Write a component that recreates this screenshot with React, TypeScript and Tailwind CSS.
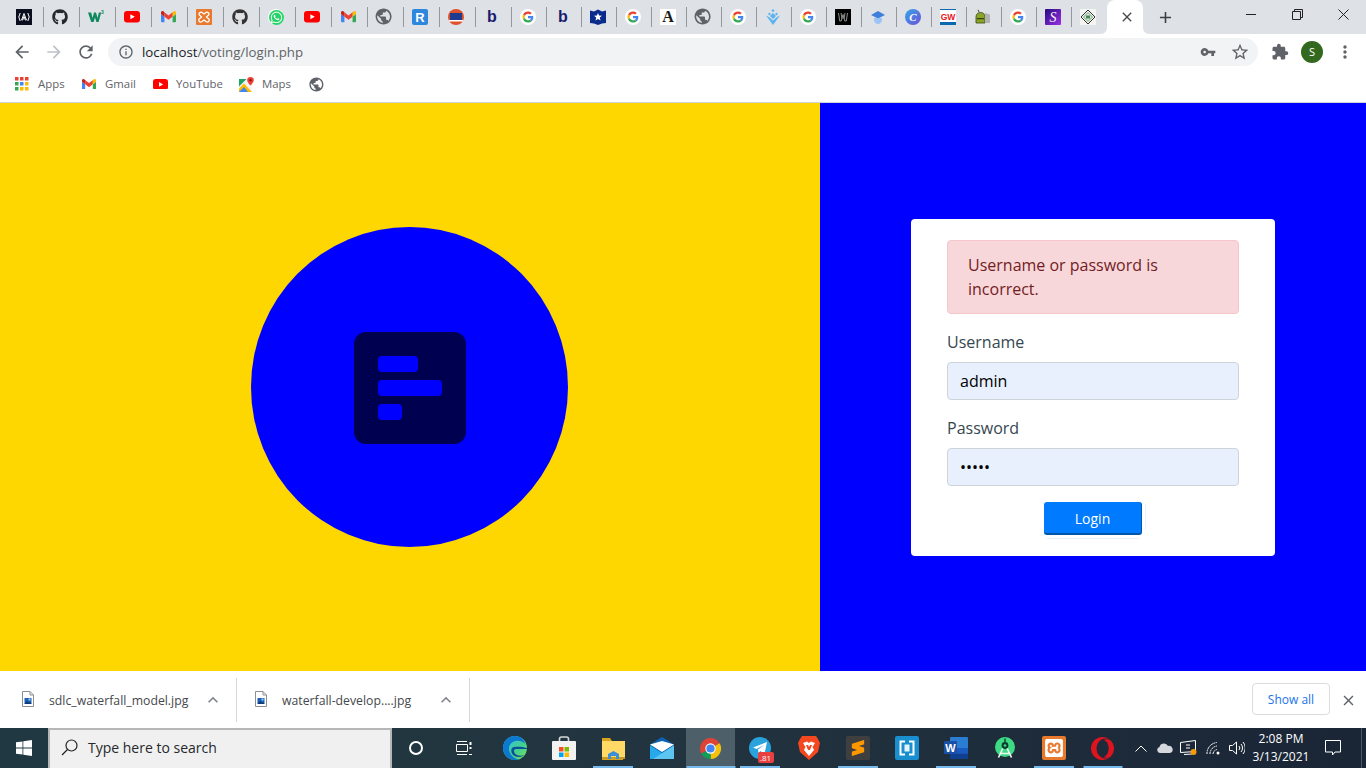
import React from "react";
import {
  MdArrowBack, MdArrowForward, MdRefresh, MdInfoOutline, MdVpnKey, MdStarBorder, MdExtension, MdMoreVert, MdPublic, MdClose, MdAdd, MdExpandLess,
} from "react-icons/md";
import { FaGithub, FaWhatsapp } from "react-icons/fa";
import { SiXampp, SiOpera, SiSublimetext } from "react-icons/si";

const UI = "font-['Open_Sans','Noto_Sans',sans-serif]";

const G = ({ s = 16 }: { s?: number }) => (
  <svg width={s} height={s} viewBox="0 0 64 64">
    <circle cx="32" cy="32" r="32" fill="#fff" />
    <g transform="translate(10 10) scale(0.917)">
      <path fill="#EA4335" d="M24 9.5c3.54 0 6.71 1.22 9.21 3.6l6.85-6.85C35.9 2.38 30.47 0 24 0 14.62 0 6.51 5.38 2.56 13.22l7.98 6.19C12.43 13.72 17.74 9.5 24 9.5z" />
      <path fill="#4285F4" d="M46.98 24.55c0-1.57-.15-3.09-.38-4.55H24v9.02h12.94c-.58 2.96-2.26 5.48-4.78 7.18l7.73 6c4.51-4.18 7.09-10.36 7.09-17.65z" />
      <path fill="#FBBC05" d="M10.53 28.59c-.48-1.45-.76-2.99-.76-4.59s.27-3.14.76-4.59l-7.98-6.19C.92 16.46 0 20.12 0 24c0 3.88.92 7.54 2.56 10.78l7.97-6.19z" />
      <path fill="#34A853" d="M24 48c6.48 0 11.93-2.13 16.08-5.81l-7.73-6c-2.15 1.45-4.92 2.3-8.35 2.3-6.26 0-11.57-4.22-13.47-9.91l-7.98 6.19C6.51 42.62 14.62 48 24 48z" />
    </g>
  </svg>
);
const Gmail = ({ w = 15 }: { w?: number }) => (
  <svg width={w} height={w * 0.75} viewBox="0 0 24 18">
    <path fill="#4285F4" d="M1.6 18H5.5V9L0 4.8V16.4A1.6 1.6 0 0 0 1.6 18z" />
    <path fill="#34A853" d="M18.5 18h3.9a1.6 1.6 0 0 0 1.6-1.6V4.8L18.5 9z" />
    <path fill="#FBBC04" d="M18.5 2v7L24 4.8V2.4C24 .4 21.8-.7 20.2.5z" />
    <path fill="#EA4335" d="M5.5 9V2L12 7l6.5-5v7L12 14z" />
    <path fill="#C5221F" d="M0 2.4v2.4L5.5 9V2L3.8.5C2.2-.7 0 .4 0 2.4z" />
  </svg>
);
const Yt = ({ w = 16 }: { w?: number }) => (
  <svg width={w} height={w * 0.72} viewBox="0 0 16 11.5">
    <rect width="16" height="11.5" rx="3" fill="#f00" />
    <path d="M6.4 3.2v5.1l4.4-2.55z" fill="#fff" />
  </svg>
);
const Globe = ({ s = 16 }: { s?: number }) => <MdPublic size={s * 1.2} color="#5f6368" className="shrink-0 -m-[1.5px]" />;
const Letter = ({ c, fill, serif, size, bg }: { c: string; fill: string; serif?: boolean; size: number; bg?: string }) => (
  <svg width="16" height="16" viewBox="0 0 16 16">
    {bg && <rect width="16" height="16" fill={bg} />}
    <text x="8" y="13" textAnchor="middle" fontSize={size} fontWeight="700" fill={fill} fontFamily={serif ? "Liberation Serif, serif" : "Liberation Sans, sans-serif"}>{c}</text>
  </svg>
);

const favicons: React.ReactNode[] = [
  <svg width="16" height="16" viewBox="0 0 16 16"><rect width="16" height="16" fill="#0b0e1f" /><path d="M8 4.5 5.6 11h1.1l1.3-3.6L9.3 11h1.1zM4.2 4 2.8 8l1.4 4M11.8 4l1.4 4-1.4 4" fill="none" stroke="#fff" strokeWidth="1" /></svg>,
  <FaGithub size={16} color="#24292e" />,
  <svg width="16" height="16" viewBox="0 0 16 16"><path d="M0 3.500h3.200l1.300 5.500L6 3.500h2l1.600 5.500 1.200-5.500h2.400L10.600 13H8.400L7 8.400 5.600 13H3.200z" fill="#0f8a5f" /><text x="13" y="5" fontSize="5" fontWeight="700" fill="#0f8a5f" fontFamily="Liberation Sans, sans-serif">3</text></svg>,
  <Yt />,
  <Gmail />,
  <svg width="16" height="16" viewBox="0 0 16 16"><rect width="16" height="16" fill="#e8792d" rx="1" /><SiXamppInner /></svg>,
  <FaGithub size={16} color="#333" />,
  <FaWhatsappColor />,
  <Yt />,
  <Gmail />,
  <Globe />,
  <svg width="16" height="16" viewBox="0 0 16 16"><rect width="16" height="16" rx="2" fill="#2f86dd" /><text x="8" y="13" textAnchor="middle" fontSize="13" fontWeight="700" fill="#fff" fontFamily="Liberation Sans, sans-serif">R</text></svg>,
  <svg width="16" height="16" viewBox="0 0 16 16"><circle cx="8" cy="8" r="8" fill="#e0512b" /><rect x="2" y="4" width="12" height="7" fill="#1d3c8f" /><rect x="1" y="11" width="14" height="1.5" fill="#fff" /></svg>,
  <Letter c="b" fill="#1a1a6e" size={16} />,
  <G />,
  <Letter c="b" fill="#1a1a6e" size={16} />,
  <svg width="16" height="16" viewBox="0 0 16 16"><path d="M0 1.500 4 2.500 8 .5l4 2 4-1V14l-4 .5-4 1.500-4-1.500L0 14z" fill="#0a2a8c" /><path d="m8 4 1.100 2.600 2.800.2-2.100 1.800.7 2.800L8 9.900l-2.500 1.500.7-2.800-2.100-1.800 2.800-.2z" fill="#fff" /></svg>,
  <G />,
  <Letter c="A" fill="#1a1a1a" serif size={16} bg="#fff" />,
  <Globe />,
  <G />,
  <svg width="16" height="16" viewBox="0 0 16 16"><path d="M8 0l1.600 1.600L8 3.200 6.400 1.600zM4.500 3.600 6 5.100 4.500 6.600 3 5.100zM11.500 3.600 13 5.100l-1.500 1.500L10 5.100zM8 4l3 3-3 3-3-3zM1 6.500l7 9.500 7-9.500-3 1.500L8 11.500 4 8z" fill="#5bb4f0" /></svg>,
  <G />,
  <svg width="16" height="16" viewBox="0 0 16 16"><rect width="16" height="16" fill="#000" /><path d="M3.500 4l1.200 8h1.500L8 5.500 9.800 12h1.500l1.200-8M6 4l1 6M10 4 9 10" fill="none" stroke="#8f8f8f" strokeWidth="1" /></svg>,
  <svg width="16" height="16" viewBox="0 0 16 16"><path d="M8 2 15 6l-7 3.600L1 6z" fill="#3f7fdc" /><path d="M4 9h8v1.500c0 2.500-1.800 4.500-4 4.500s-4-2-4-4.500z" fill="#9cc3f5" /></svg>,
  <svg width="16" height="16" viewBox="0 0 16 16"><defs><linearGradient id="cg" x1="0" y1="0" x2="1" y2="1"><stop offset="0" stopColor="#3aa6e8" /><stop offset="1" stopColor="#6a4fd8" /></linearGradient></defs><circle cx="8" cy="8" r="8" fill="url(#cg)" /><text x="8" y="12" textAnchor="middle" fontSize="11" fontStyle="italic" fontWeight="700" fill="#fff" fontFamily="Liberation Serif, serif">C</text></svg>,
  <svg width="16" height="16" viewBox="0 0 16 16"><rect width="16" height="16" fill="#fff" /><rect width="16" height="1" fill="#0a6ab0" /><rect y="13" width="16" height="3" fill="#0a6ab0" /><text x="8" y="10.500" textAnchor="middle" fontSize="8.500" fontWeight="700" fill="#e8141c" fontFamily="Liberation Sans, sans-serif">GW</text></svg>,
  <svg width="16" height="16" viewBox="0 0 16 16"><path d="M1 8c0-3 2-4.500 4.500-4.500S10 5 10 8v6H1z" fill="#8aa62a" stroke="#39440f" strokeWidth=".8" /><rect x="2" y="9" width="7" height="1.300" fill="#39440f" /><path d="M10 4l5 1.500V14h-5z" fill="#b3b3b3" /><path d="M4 3 3 .8" stroke="#444" /></svg>,
  <G />,
  <svg width="16" height="16" viewBox="0 0 16 16"><defs><linearGradient id="sg" x1="0" y1="0" x2="1" y2="1"><stop offset="0" stopColor="#2a0a7e" /><stop offset="1" stopColor="#9a30e8" /></linearGradient></defs><rect width="16" height="16" rx="1" fill="url(#sg)" /><text x="8" y="13" textAnchor="middle" fontSize="14" fontStyle="italic" fill="#f4f4f4" fontFamily="Liberation Serif, serif">S</text></svg>,
  <svg width="16" height="16" viewBox="0 0 16 16"><rect width="16" height="16" fill="#f4f4f0" /><path d="M8 1l7 7-7 7-7-7z" fill="none" stroke="#333" strokeWidth="1" /><path d="M8 3.500 12.500 8 8 12.500 3.500 8z" fill="#dfe8d8" stroke="#4a8a5a" strokeWidth=".8" /><rect x="6" y="6.500" width="4" height="3" fill="#4a8a5a" /></svg>,
];

function SiXamppInner() {
  return <path d="M3 5a2 2 0 0 1 3.400-1.200L8 5l1.600-1.200A2 2 0 0 1 13 5a2 2 0 0 1-1.400 1.900L10.500 8l1.100 1.100A2 2 0 1 1 9.600 12.200L8 11l-1.600 1.200a2 2 0 1 1-2-3.100L5.500 8 4.400 6.900A2 2 0 0 1 3 5z" fill="none" stroke="#fff" strokeWidth="1.300" />;
}
function FaWhatsappColor() {
  return (
    <span className="relative flex h-4 w-4 items-center justify-center rounded-full bg-white">
      <span className="flex h-[15px] w-[15px] items-center justify-center rounded-full bg-[#25d366]"><FaWhatsapp size={13} color="#fff" /></span>
    </span>
  );
}

const FileIcon = () => (
  <svg width="12" height="16" viewBox="0 0 12 16">
    <path d="M.5.5h7.500l3.500 3.500v11.500H.5z" fill="#fff" stroke="#8a8f94" />
    <path d="M8 .5V4h3.500" fill="none" stroke="#8a8f94" />
    <rect x="2.500" y="7" width="7" height="6" fill="#1a5fb4" />
    <path d="M2.500 13 5 10l2 2 1-1 1.500 2z" fill="#0c3a78" />
    <rect x="6.500" y="7.500" width="2" height="2" fill="#9cc9f5" />
  </svg>
);

const Chrome = () => (
  <svg width="23" height="23" viewBox="0 0 24 24">
    <path d="M12 12 2.470 17.500A11 11 0 0 1 21.530 6.500Z" fill="#db4437" />
    <path d="M12 12 21.530 6.500A11 11 0 0 1 12 23Z" fill="#f4c20d" />
    <path d="M12 12V23A11 11 0 0 1 2.470 17.500Z" fill="#0f9d58" />
    <circle cx="12" cy="12" r="5.400" fill="#fff" />
    <circle cx="12" cy="12" r="4.300" fill="#4285f4" />
  </svg>
);

const taskApps: { icon: React.ReactNode; active?: boolean; bar?: string }[] = [
  {
    icon: (
      <svg width="24" height="24" viewBox="0 0 24 24">
        <defs><linearGradient id="eg" x1="0" y1="0" x2="1" y2="1"><stop offset="0" stopColor="#35c1f1" /><stop offset="0.6" stopColor="#42d08e" /><stop offset="1" stopColor="#7ee05a" /></linearGradient></defs>
        <circle cx="12" cy="12" r="12" fill="url(#eg)" />
        <path d="M0 12C0 5 6 0 12 0c5 0 9 3 10 7.500-3-3-9-4-13-1C6 8.500 5 13 7 17c1.500 3 5 6 9 6.300C14.500 24 13 24 12 24 5 24 0 18 0 12z" fill="#0c78d0" />
        <path d="M9 12c-2 3 0 9 7 9 2 0 4-1 5-2-6 2-10-1-10-4 0-1.500 1-2 2.500-2H24v-1c-5-1-12-2-15 0z" fill="#0a4f9a" />
      </svg>
    ),
  },
  {
    icon: (
      <svg width="24" height="24" viewBox="0 0 24 24">
        <path d="M7.500 7V3a2 2 0 0 1 2-2h5a2 2 0 0 1 2 2v4" fill="none" stroke="#d8d8d8" strokeWidth="1.600" />
        <rect y="5" width="24" height="19" rx="1" fill="#f2f2f2" />
        <rect x="7" y="11" width="4.500" height="4.500" fill="#f25022" /><rect x="12.500" y="11" width="4.500" height="4.500" fill="#7fba00" />
        <rect x="7" y="16.500" width="4.500" height="4.500" fill="#00a4ef" /><rect x="12.500" y="16.500" width="4.500" height="4.500" fill="#ffb900" />
      </svg>
    ),
  },
  {
    bar: "w-[40px]",
    icon: (
      <svg width="24" height="24" viewBox="0 0 24 24">
        <path d="M1 2h8l2 3h11v19H1z" fill="#d9a21f" />
        <path d="M1 5h23v17.500H1z" fill="#ffd866" />
        <rect x="1" y="21" width="23" height="2" fill="#c79a24" />
        <path d="M7 18l5.500-3 5.500 3v5H15v-3H10v3H7z" fill="#3b8fd6" />
      </svg>
    ),
  },
  {
    icon: (
      <svg width="24" height="22" viewBox="0 0 24 22">
        <path d="M12 0 24 7.500V22H0V7.500z" fill="#0a63b5" />
        <path d="M0 7.500 12 15l12-7.500L12 4z" fill="#fff" />
        <path d="M0 8.500 12 16 24 8.500V22H0z" fill="#27a8ea" />
        <path d="M24 8.500V22H3z" fill="#5cc5f2" />
      </svg>
    ),
  },
  { icon: <Chrome />, active: true, bar: "w-full" },
  {
    bar: "w-[40px]",
    icon: (
      <span className="relative flex h-[22px] w-[22px] items-center justify-center rounded-full bg-[#2aa3dc]">
        <svg width="14" height="14" viewBox="0 0 14 14"><path d="M0 6.500 14 1l-2.500 12-4-3-2 2-.5-3.500L11 4 3.500 8z" fill="#fff" /></svg>
        <span className={`absolute left-[9px] top-[15px] flex h-[11px] w-[16px] items-center justify-center rounded-[2px] bg-[#e8403f] text-[8px] leading-none text-white ${UI}`}>.81</span>
      </span>
    ),
  },
  {
    icon: (
      <svg width="22" height="24" viewBox="0 0 22 24">
        <path d="M4 0h14l2 3 2 4-2 9-9 8-9-8L0 7l2-4z" fill="#f5481e" />
        <path d="M5 7l4-1.500L11 7l2-1.500L17 7l-2.500 4L16 14l-5 6-5-6 1.500-3z" fill="#fff" />
        <path d="M8 9h2l1 2 1-2h2l-2 5h-2z" fill="#f5481e" />
      </svg>
    ),
  },
  {
    bar: "w-[40px]",
    icon: <span className="flex h-6 w-6 items-center justify-center rounded-[2px] bg-[#3f3f3f]"><SiSublimetext size={16} color="#ff9800" /></span>,
  },
  {
    icon: (
      <span className="flex h-6 w-6 items-center justify-center rounded-[2px] bg-[#1a8fcf]">
        <svg width="16" height="16" viewBox="0 0 16 16"><path d="M6 1.500H1.500v13H6M10 1.500h4.500v13H10" fill="none" stroke="#fff" strokeWidth="2" /><rect x="5.500" y="4.500" width="5" height="7" fill="#e8f4fb" /></svg>
      </span>
    ),
  },
  {
    bar: "w-[40px]",
    icon: (
      <svg width="24" height="22" viewBox="0 0 24 22">
        <rect x="6" width="18" height="22" rx="1" fill="#2b7cd3" />
        <rect x="6" y="11" width="18" height="5.500" fill="#185abd" />
        <rect x="6" y="16.500" width="18" height="5.500" fill="#103f91" />
        <rect y="4" width="13" height="13" rx="1" fill="#1a4fa8" />
        <text x="6.500" y="14.500" textAnchor="middle" fontSize="11" fontWeight="700" fill="#fff" fontFamily="Liberation Sans, sans-serif">W</text>
      </svg>
    ),
  },
  {
    icon: (
      <svg width="20" height="22" viewBox="0 0 20 22">
        <circle cx="10" cy="10" r="10" fill="#3ddc84" />
        <circle cx="10" cy="8.500" r="3.400" fill="#0f3d2e" />
        <circle cx="10" cy="8.500" r="1.300" fill="#3ddc84" />
        <path d="M10 1.500v3.500" stroke="#0f3d2e" strokeWidth="1.400" />
        <path d="M7.800 11.500 3.500 20.500M12.200 11.500l4.300 9M5 16.500h10" fill="none" stroke="#f2f6f4" strokeWidth="1.700" />
      </svg>
    ),
  },
  {
    bar: "w-[40px]",
    icon: <span className="flex h-6 w-6 items-center justify-center rounded-[2px] bg-[#e8792d]"><SiXampp size={18} color="#fff" /></span>,
  },
  { bar: "w-[39px]", icon: <SiOpera size={23} color="#e0141f" /> },
];

function ChromeBar() {
  return (
    <div className={`${UI} shrink-0 bg-white`}>
      <div className="flex h-[34px] bg-[#dee1e6] pl-[8px]">
        {favicons.map((f, i) => (
          <div key={i} className={`flex shrink-0 items-center justify-between pl-[8px] ${i < 14 ? "w-[36px]" : "w-[35px]"}`}>
            <span className="flex h-4 w-4 items-center justify-center">{f}</span>
            {i < favicons.length - 1 && <span className="h-[20px] w-px bg-[#94979b]" />}
          </div>
        ))}
        <div className="relative flex w-[36px] shrink-0 items-center justify-center rounded-t-lg bg-white pl-[4px]">
          <MdClose size={16} color="#45484c" className="mb-[1px]" />
          <svg className="absolute bottom-0 left-[-6px]" width="6" height="6" viewBox="0 0 6 6"><path d="M6 0v6H0a6 6 0 0 0 6-6z" fill="#fff" /></svg>
          <svg className="absolute bottom-0 right-[-6px]" width="6" height="6" viewBox="0 0 6 6"><path d="M0 0v6h6a6 6 0 0 1-6-6z" fill="#fff" /></svg>
        </div>
        <div className="flex w-[44px] shrink-0 items-center justify-center"><MdAdd size={19} color="#3c4043" /></div>
        <div className="ml-auto flex">
          <div className="flex h-[28px] w-[46px] items-center justify-center"><span className="h-px w-[10px] bg-[#202124]" /></div>
          <div className="flex h-[28px] w-[46px] items-center justify-center">
            <svg width="11" height="11" viewBox="0 0 11 11"><path d="M.5 2.500h8v8h-8zM2.500 2.500v-2h8v8h-2" fill="none" stroke="#202124" /></svg>
          </div>
          <div className="flex h-[28px] w-[46px] items-center justify-center">
            <svg width="11" height="11" viewBox="0 0 11 11"><path d="M.5.500l10 10M10.500.500l-10 10" stroke="#202124" /></svg>
          </div>
        </div>
      </div>
      <div className="flex h-[36px] items-center">
        <div className="flex w-[108px] shrink-0 items-center pl-[12px]">
          <MdArrowBack size={20} color="#5f6368" />
          <MdArrowForward size={20} color="#bdc1c6" className="ml-[12px]" />
          <MdRefresh size={20} color="#5f6368" className="ml-[12px]" />
        </div>
        <div className="flex h-[28px] w-[1150px] items-center rounded-full bg-[#f1f3f4] pl-[10px] pr-[8px]">
          <MdInfoOutline size={16} color="#5f6368" />
          <span className="ml-[8px] pt-[1px] text-[13.25px] leading-none text-[#202124]">localhost<span className="text-[#5f6368]">/voting/login.php</span></span>
          <MdVpnKey size={16} color="#5f6368" className="ml-auto" />
          <MdStarBorder size={20} color="#5f6368" className="ml-[14px]" />
        </div>
        <MdExtension size={18} color="#5f6368" className="ml-[13px]" />
        <span className="ml-[12px] flex h-[22px] w-[22px] items-center justify-center rounded-full bg-[#33691e] text-[11px] text-white">S</span>
        <MdMoreVert size={20} color="#5f6368" className="ml-[12px]" />
      </div>
      <div className="flex h-[33px] items-center border-b border-[#d0d3d7] pb-[4px] text-[11.4px] text-[#5f6368]">
        <svg className="ml-[15px]" width="14" height="14" viewBox="0 0 14 14">
          {["#ea4335", "#ea4335", "#ea4335", "#34a853", "#4285f4", "#fbbc04", "#34a853", "#fbbc04", "#fbbc04"].map((c, i) => (
            <rect key={i} x={(i % 3) * 5} y={Math.floor(i / 3) * 5} width="3.500" height="3.500" fill={c} />
          ))}
        </svg>
        <span className="ml-[9px] w-[27px] whitespace-nowrap">Apps</span>
        <span className="ml-[17px] flex w-[14px] justify-center"><Gmail w={14} /></span>
        <span className="ml-[9px] w-[30px] whitespace-nowrap">Gmail</span>
        <span className="ml-[18px] flex w-[15px]"><Yt w={15} /></span>
        <span className="ml-[8px] w-[46px] whitespace-nowrap">YouTube</span>
        <svg className="ml-[17px]" width="15" height="15" viewBox="0 0 15 15">
          <rect y="2" width="13" height="13" fill="#f1f3f4" />
          <path d="M0 2h7.500L0 9.500z" fill="#1fa463" />
          <path d="M0 15V11.500L5 6.500l8 8.500z" fill="#fbbc04" />
          <path d="M0 15 5 10l4 5z" fill="#4285f4" />
          <path d="M11.500 0a3.300 3.300 0 0 0-3.300 3.300c0 2.200 3.300 5.200 3.300 5.200s3.300-3 3.300-5.200A3.300 3.300 0 0 0 11.500 0z" fill="#ea4335" />
          <circle cx="11.500" cy="3.300" r="1.200" fill="#a50e0e" />
        </svg>
        <span className="ml-[8px] w-[29px] whitespace-nowrap">Maps</span>
        <span className="ml-[18px] flex"><Globe s={14} /></span>
      </div>
    </div>
  );
}

function Logo() {
  return (
    <svg className="ml-[2px] mt-[2px]" width="112" height="112" viewBox="0 0 112 112">
      <rect width="112" height="112" rx="12" fill="#000050" />
      <rect x="24" y="24" width="40" height="16" rx="4" fill="#0000ff" />
      <rect x="24" y="48" width="64" height="16" rx="4" fill="#0000ff" />
      <rect x="24" y="72" width="24" height="16" rx="4" fill="#0000ff" />
    </svg>
  );
}

function Login() {
  const input = "h-[38px] w-full rounded-[4px] border border-[#ced4da] bg-[#e8f0fe] px-[12px] text-[16px] text-black outline-none";
  return (
    <div className="w-[364px] rounded-[4px] bg-white px-[36px] py-[21px] text-[16px] leading-[24px]">
      <div className="mb-[16px] rounded-[4px] border border-[#f5c6cb] bg-[#f8d7da] px-[20px] py-[12px] text-[#721c24]">Username or password is incorrect.</div>
      <label className="mb-[8px] block text-[#36474f]">Username</label>
      <input className={`${input} mb-[16px] block`} readOnly value="admin" />
      <label className="mb-[8px] block text-[#36474f]">Password</label>
      <input className={`${input} mb-[16px] block`} readOnly type="password" value="admin" />
      <div className="flex justify-center">
        <button className="relative h-[33px] w-[98px] rounded-[3px] border-b-2 border-r border-[#0056a8] bg-[#007bff] pt-[3px] text-[14px] leading-none text-white">
          Login
          <span className="absolute bottom-[3px] right-[-5px] top-[2px] w-px bg-[#e6f2ff]" />
          <span className="absolute bottom-[-6px] left-[3px] right-[2px] h-px bg-[#e6f2ff]" />
        </button>
      </div>
    </div>
  );
}

function DownloadItem({ name, w, pad }: { name: string; w: string; pad: string }) {
  return (
    <div className={`flex h-[44px] items-center border-r border-[#d5d7da] ${w}`}>
      <span className={`mb-[2px] flex ${pad}`}><FileIcon /></span>
      <span className="ml-[15px] flex-1 whitespace-nowrap pt-[2px] text-[12.25px] text-[#45484c]">{name}</span>
      <MdExpandLess size={20} color="#80868b" className="mr-[13px]" />
    </div>
  );
}

function Downloads() {
  return (
    <div className={`${UI} flex h-[57px] shrink-0 items-center bg-white pt-[1px]`}>
      <DownloadItem name="sdlc_waterfall_model.jpg" w="w-[237px]" pad="ml-[22px]" />
      <DownloadItem name="waterfall-develop....jpg" w="w-[233px]" pad="ml-[18px]" />
      <button className="mb-[2px] ml-auto flex h-[32px] w-[78px] items-center justify-center rounded-[4px] border border-[#dadce0] pt-[1px] text-[12px] text-[#1a73e8]">Show all</button>
      <MdClose size={17} color="#5f6368" className="ml-[10px] mr-[9px]" />
    </div>
  );
}

function Taskbar() {
  return (
    <div className={`${UI} flex h-[40px] shrink-0 items-stretch bg-gradient-to-r from-[#203841] via-[#22343f] to-[#1a2536] text-white`}>
      <div className="flex w-[48px] items-center justify-center">
        <svg width="16" height="16" viewBox="0 0 16 16"><path d="M0 2.300 6.500 1.400v6.200H0zM7.300 1.300 16 0v7.600H7.300zM0 8.400h6.500v6.200L0 13.700zM7.300 8.400H16V16l-8.700-1.300z" fill="#fff" /></svg>
      </div>
      <div className="flex w-[344px] items-center border-2 border-b-0 border-[#b4b6b8] bg-[#f0f0f0] pb-[3px] pl-[11px] text-[14px] text-[#26282b]">
        <svg width="17" height="17" viewBox="0 0 17 17"><circle cx="10.500" cy="6.500" r="5.500" fill="none" stroke="#222" strokeWidth="1.200" /><path d="M6.500 10.500 1 16" stroke="#222" strokeWidth="1.300" /></svg>
        <span className="ml-[10px] whitespace-nowrap">Type here to search</span>
      </div>
      <div className="flex w-[48px] items-center justify-center"><span className="h-[14px] w-[14px] rounded-full border-2 border-white" /></div>
      <div className="mr-[3px] flex w-[47px] items-center justify-center">
        <svg width="16" height="16" viewBox="0 0 16 16" fill="none" stroke="#fff"><path d="M.500 4.500h11v7h-11zM1 1.500h10M1 14.500h10" /><path d="M14.500 2v3M14.500 7v2" strokeWidth="2" /><path d="M13 14.500h3" /></svg>
      </div>
      {taskApps.map((a, i) => (
        <div key={i} className={`relative flex w-[49px] shrink-0 items-center justify-center ${a.active ? "bg-[#4d5f68]" : ""}`}>
          {a.icon}
          {a.bar && <span className={`absolute bottom-0 left-1/2 h-[2px] -translate-x-1/2 bg-[#76b9ed] ${a.bar}`} />}
        </div>
      ))}
      <div className="flex w-[28px] items-center justify-center">
        <svg width="12" height="7" viewBox="0 0 12 7"><path d="M.500 6.500 6 1l5.500 5.500" fill="none" stroke="#fff" /></svg>
      </div>
      <div className="flex w-[20px] items-center justify-center">
        <svg width="16" height="10" viewBox="0 0 16 10"><path d="M3 10a3 3 0 0 1-.5-5.900A4.500 4.500 0 0 1 11 3a3.500 3.500 0 0 1 2 7z" fill="#d5d8dc" /></svg>
      </div>
      <div className="flex w-[26px] items-center justify-center">
        <svg width="17" height="16" viewBox="0 0 17 16" fill="none" stroke="#fff"><path d="M.500 2.500l15-2v11l-15 1zM4 14.500l8-.5" /><path d="M6 5h4M10 8H6" strokeWidth="1.200" /><circle cx="13.500" cy="12" r="3" fill="#f59a0c" stroke="none" /></svg>
      </div>
      <div className="flex w-[25px] items-center justify-center">
        <svg width="16" height="14" viewBox="0 0 16 14" fill="none" stroke="#fff"><path d="M1 13A11 11 0 0 1 11 1.500M4 13a8 8 0 0 1 7-8M7 13a5 5 0 0 1 4-4.500" strokeDasharray="2 .6" /><circle cx="12" cy="12" r="1.500" fill="#fff" stroke="none" /></svg>
      </div>
      <div className="flex w-[22px] items-center justify-center">
        <svg width="16" height="14" viewBox="0 0 16 14" fill="none" stroke="#fff"><path d="M.500 4.500h3L7.500 1v12l-4-3.500h-3zM10 5a3 3 0 0 1 0 4M12 3a6 6 0 0 1 0 8M14 1a9 9 0 0 1 0 12" /></svg>
      </div>
      <div className="flex w-[66px] flex-col items-center justify-center text-[12px] leading-[18px]">
        <span>2:08 PM</span>
        <span>3/13/2021</span>
      </div>
      <div className="flex w-[38px] items-center justify-center">
        <svg width="16" height="16" viewBox="0 0 16 16"><path d="M.500.500h15v11.500H10L7.500 15V12H.500z" fill="none" stroke="#fff" /></svg>
      </div>
      <div className="ml-[9px] w-px bg-[#4a5561]" />
    </div>
  );
}

export default function App() {
  return (
    <div className={`${UI} flex h-[768px] w-[1366px] flex-col overflow-hidden`}>
      <ChromeBar />
      <div className="flex min-h-0 flex-1">
        <div className="flex w-[820px] items-center justify-center bg-[#ffd700]">
          <div className="mr-[2px] flex h-[320px] w-[317px] items-center justify-center rounded-[50%] bg-[#0000ff]"><Logo /></div>
        </div>
        <div className="flex flex-1 items-center justify-center bg-[#0000ff]"><Login /></div>
      </div>
      <Downloads />
      <Taskbar />
    </div>
  );
}
